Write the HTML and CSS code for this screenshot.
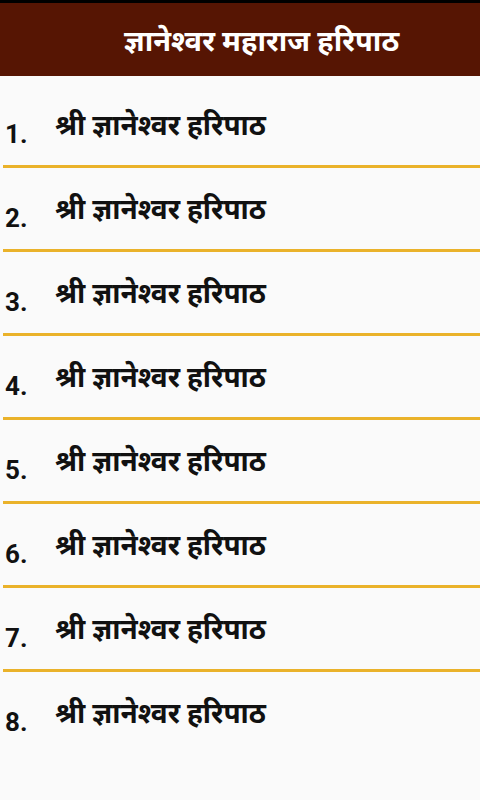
FILE: index.html
```html
<!DOCTYPE html>
<html>
<head>
<meta charset="utf-8">
<link rel="stylesheet" href="styles.css">
</head>
<body>
<div class="status"></div>
<header class="bar"><h1 class="title">ज्ञानेश्वर महाराज हरिपाठ</h1></header>
<ul class="list">
<li class="row"><span class="num">1.</span><span class="name">श्री ज्ञानेश्वर हरिपाठ</span></li>
<li class="row"><span class="num">2.</span><span class="name">श्री ज्ञानेश्वर हरिपाठ</span></li>
<li class="row"><span class="num">3.</span><span class="name">श्री ज्ञानेश्वर हरिपाठ</span></li>
<li class="row"><span class="num">4.</span><span class="name">श्री ज्ञानेश्वर हरिपाठ</span></li>
<li class="row"><span class="num">5.</span><span class="name">श्री ज्ञानेश्वर हरिपाठ</span></li>
<li class="row"><span class="num">6.</span><span class="name">श्री ज्ञानेश्वर हरिपाठ</span></li>
<li class="row"><span class="num">7.</span><span class="name">श्री ज्ञानेश्वर हरिपाठ</span></li>
<li class="row last"><span class="num">8.</span><span class="name">श्री ज्ञानेश्वर हरिपाठ</span></li>
</ul>
</body>
</html>
```
FILE: styles.css
```css
html, body { margin: 0; padding: 0; }
body { width: 480px; height: 800px; background: #fafafa; font-family: Roboto, "Noto Sans", sans-serif; overflow: hidden; }
.status { height: 3px; background: #000; }
.bar { height: 73px; background: #561503; display: flex; align-items: center; padding-left: 124px; box-sizing: border-box; }
.title { margin: 0; color: #fff; font-size: 29px; font-weight: bold; }
.list { list-style: none; margin: 0; padding: 8px 0 0 3px; }
.row { height: 81px; border-bottom: 3px solid #eab22a; display: flex; align-items: center; }
.row.last { border-bottom: none; }
.num { width: 52px; font-size: 26px; font-weight: bold; color: #111; padding-left: 2px; padding-top: 18px; box-sizing: border-box; }
.name { font-size: 28px; font-weight: bold; color: #111; padding-bottom: 2px; }
```
